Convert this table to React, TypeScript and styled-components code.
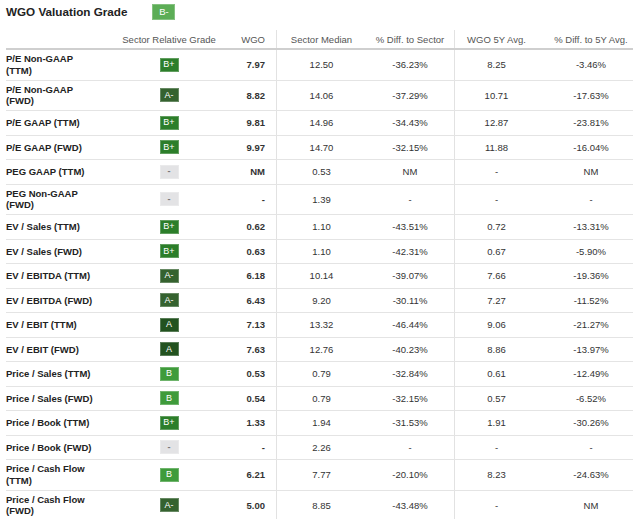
import React from "react";
import styled, { createGlobalStyle } from "styled-components";

const Global = createGlobalStyle`
  html, body { margin: 0; padding: 0; background: #fff; }
  body { font-family: "Liberation Sans", Arial, sans-serif; }
`;

const Page = styled.div`
  width: 640px;
  height: 519px;
  overflow: hidden;
  padding: 0 7px 0 6px;
  box-sizing: border-box;
`;

const TitleBar = styled.div`
  display: flex;
  align-items: center;
  height: 23px;
  gap: 25px;
`;

const Title = styled.h1`
  margin: 0;
  font-size: 11.7px;
  font-weight: bold;
  color: #222;
`;

type GradeKind = "B-" | "B" | "B+" | "A-" | "A" | "-";

const gradeColors: Record<GradeKind, { bg: string; fg: string }> = {
  "B-": { bg: "#5cad56", fg: "#fff" },
  B: { bg: "#3f9b3b", fg: "#fff" },
  "B+": { bg: "#2c7e2a", fg: "#fff" },
  "A-": { bg: "#35622f", fg: "#fff" },
  A: { bg: "#22521f", fg: "#fff" },
  "-": { bg: "#e3e3e5", fg: "#777" },
};

const Badge = styled.span<{ $g: GradeKind; $big?: boolean }>`
  display: inline-flex;
  align-items: center;
  justify-content: center;
  width: ${(p) => (p.$big ? 23 : 19)}px;
  height: ${(p) => (p.$big ? 16 : 14)}px;
  background: ${(p) => gradeColors[p.$g].bg};
  color: ${(p) => gradeColors[p.$g].fg};
  font-size: ${(p) => (p.$big ? 9.5 : 9)}px;
  font-weight: ${(p) => (p.$g === "-" ? "bold" : "normal")};
  line-height: 1;
  box-sizing: border-box;
  border: 1px solid rgba(255, 255, 255, 0.25);
`;

const Table = styled.div`
  margin-top: 7px;
  font-size: 9.5px;
`;

const cols = "114px 98px 58px 90px 88px 84px 95px";

const HeaderRow = styled.div`
  display: grid;
  grid-template-columns: ${cols};
  height: 18px;
  border-bottom: 2px solid #cfcfcf;
  color: #555;
`;

const Row = styled.div<{ $double?: boolean }>`
  display: grid;
  grid-template-columns: ${cols};
  height: ${(p) => (p.$double ? 29.5 : 23.5)}px;
  border-bottom: 1px solid #e4e4e4;
  color: #333;
`;

type Align = "left" | "center" | "right";

const Cell = styled.div<{ $align?: Align; $divider?: boolean; $bold?: boolean; $pl?: number; $pr?: number }>`
  display: flex;
  align-items: center;
  justify-content: ${(p) =>
    p.$align === "left" ? "flex-start" : p.$align === "right" ? "flex-end" : "center"};
  text-align: ${(p) => p.$align || "center"};
  padding-left: ${(p) => p.$pl || 0}px;
  padding-right: ${(p) => p.$pr || 0}px;
  border-left: ${(p) => (p.$divider ? "1px solid #e2e2e2" : "none")};
  font-weight: ${(p) => (p.$bold ? "bold" : "normal")};
  white-space: nowrap;
`;

const Label = styled.div`
  font-weight: bold;
  color: #222;
  line-height: 11.5px;
  white-space: normal;
`;

type RowData = {
  label: string[];
  grade: GradeKind;
  wgo: string;
  med: string;
  diff: string;
  avg: string;
  diff5: string;
};

const rows: RowData[] = [
  { label: ["P/E Non-GAAP", "(TTM)"], grade: "B+", wgo: "7.97", med: "12.50", diff: "-36.23%", avg: "8.25", diff5: "-3.46%" },
  { label: ["P/E Non-GAAP", "(FWD)"], grade: "A-", wgo: "8.82", med: "14.06", diff: "-37.29%", avg: "10.71", diff5: "-17.63%" },
  { label: ["P/E GAAP (TTM)"], grade: "B+", wgo: "9.81", med: "14.96", diff: "-34.43%", avg: "12.87", diff5: "-23.81%" },
  { label: ["P/E GAAP (FWD)"], grade: "B+", wgo: "9.97", med: "14.70", diff: "-32.15%", avg: "11.88", diff5: "-16.04%" },
  { label: ["PEG GAAP (TTM)"], grade: "-", wgo: "NM", med: "0.53", diff: "NM", avg: "-", diff5: "NM" },
  { label: ["PEG Non-GAAP", "(FWD)"], grade: "-", wgo: "-", med: "1.39", diff: "-", avg: "-", diff5: "-" },
  { label: ["EV / Sales (TTM)"], grade: "B+", wgo: "0.62", med: "1.10", diff: "-43.51%", avg: "0.72", diff5: "-13.31%" },
  { label: ["EV / Sales (FWD)"], grade: "B+", wgo: "0.63", med: "1.10", diff: "-42.31%", avg: "0.67", diff5: "-5.90%" },
  { label: ["EV / EBITDA (TTM)"], grade: "A-", wgo: "6.18", med: "10.14", diff: "-39.07%", avg: "7.66", diff5: "-19.36%" },
  { label: ["EV / EBITDA (FWD)"], grade: "A-", wgo: "6.43", med: "9.20", diff: "-30.11%", avg: "7.27", diff5: "-11.52%" },
  { label: ["EV / EBIT (TTM)"], grade: "A", wgo: "7.13", med: "13.32", diff: "-46.44%", avg: "9.06", diff5: "-21.27%" },
  { label: ["EV / EBIT (FWD)"], grade: "A", wgo: "7.63", med: "12.76", diff: "-40.23%", avg: "8.86", diff5: "-13.97%" },
  { label: ["Price / Sales (TTM)"], grade: "B", wgo: "0.53", med: "0.79", diff: "-32.84%", avg: "0.61", diff5: "-12.49%" },
  { label: ["Price / Sales (FWD)"], grade: "B", wgo: "0.54", med: "0.79", diff: "-32.15%", avg: "0.57", diff5: "-6.52%" },
  { label: ["Price / Book (TTM)"], grade: "B+", wgo: "1.33", med: "1.94", diff: "-31.53%", avg: "1.91", diff5: "-30.26%" },
  { label: ["Price / Book (FWD)"], grade: "-", wgo: "-", med: "2.26", diff: "-", avg: "-", diff5: "-" },
  { label: ["Price / Cash Flow", "(TTM)"], grade: "B", wgo: "6.21", med: "7.77", diff: "-20.10%", avg: "8.23", diff5: "-24.63%" },
  { label: ["Price / Cash Flow", "(FWD)"], grade: "A-", wgo: "5.00", med: "8.85", diff: "-43.48%", avg: "-", diff5: "NM" },
];

export default function App() {
  return (
    <Page>
      <Global />
      <TitleBar>
        <Title>WGO Valuation Grade</Title>
        <Badge $g="B-" $big>
          B-
        </Badge>
      </TitleBar>
      <Table>
        <HeaderRow>
          <Cell $align="left" />
          <Cell>Sector Relative Grade</Cell>
          <Cell $align="right" $pr={11}>
            WGO
          </Cell>
          <Cell $divider>Sector Median</Cell>
          <Cell>% Diff. to Sector</Cell>
          <Cell $divider>WGO 5Y Avg.</Cell>
          <Cell $pl={11}>% Diff. to 5Y Avg.</Cell>
        </HeaderRow>
        {rows.map((r, i) => (
          <Row key={i} $double={r.label.length > 1}>
            <Cell $align="left">
              <Label>
                {r.label.map((l, j) => (
                  <div key={j}>{l}</div>
                ))}
              </Label>
            </Cell>
            <Cell>
              <Badge $g={r.grade}>{r.grade}</Badge>
            </Cell>
            <Cell $align="right" $pr={11} $bold>
              {r.wgo}
            </Cell>
            <Cell $divider>{r.med}</Cell>
            <Cell>{r.diff}</Cell>
            <Cell $divider>{r.avg}</Cell>
            <Cell $pl={11}>{r.diff5}</Cell>
          </Row>
        ))}
      </Table>
    </Page>
  );
}
